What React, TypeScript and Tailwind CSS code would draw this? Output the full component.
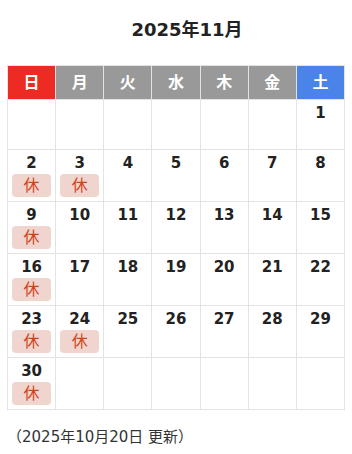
const HEAD = [
  { label: "日", bg: "bg-[#ee2b22]" },
  { label: "月", bg: "bg-[#999999]" },
  { label: "火", bg: "bg-[#999999]" },
  { label: "水", bg: "bg-[#999999]" },
  { label: "木", bg: "bg-[#999999]" },
  { label: "金", bg: "bg-[#999999]" },
  { label: "土", bg: "bg-[#4a84e8]" },
];

const HOLIDAYS = [2, 3, 9, 16, 23, 24, 30];

function buildWeeks() {
  // Nov 2025 starts on Saturday
  const cells: (number | null)[] = Array(6).fill(null);
  for (let d = 1; d <= 30; d++) cells.push(d);
  while (cells.length % 7) cells.push(null);
  const weeks: (number | null)[][] = [];
  for (let i = 0; i < cells.length; i += 7) weeks.push(cells.slice(i, i + 7));
  return weeks;
}

export default function App() {
  const weeks = buildWeeks();

  return (
    <div className="w-[352px] bg-white text-[#222]" style={{ fontFamily: '"DejaVu Sans", "Noto Sans CJK JP", sans-serif' }}>
      <h1 className="pt-[18px] pl-[22px] text-center text-[18px] font-bold leading-[24px]">2025年11月</h1>

      <table className="mx-[7px] mt-[23px] w-[338px] table-fixed border-collapse border border-[#e3e3e3]">
        <thead>
          <tr className="h-[34px]">
            {HEAD.map((h) => (
              <th key={h.label} className={`${h.bg} border border-[#e3e3e3] p-0 text-center text-[16px] font-bold text-white`}>
                {h.label}
              </th>
            ))}
          </tr>
        </thead>
        <tbody>
          {weeks.map((week, wi) => (
            <tr key={wi} className="h-[50px]">
              {week.map((d, di) => (
                <td key={di} className="border border-[#e3e3e3] px-[4px] pt-[3px] pb-[4px] align-top">
                  {d && (
                    <div className="flex flex-col items-center">
                      <span className="text-[15px] font-bold leading-[20px] text-[#222]">{d}</span>
                      {HOLIDAYS.includes(d) && (
                        <span className="mt-[1px] block h-[23px] w-full rounded-[4px] bg-[#f0d5cf] text-center text-[16px] leading-[23px] text-[#d2451b]">
                          休
                        </span>
                      )}
                    </div>
                  )}
                </td>
              ))}
            </tr>
          ))}
        </tbody>
      </table>

      <p className="mt-[17px] px-[7px] text-[15px] leading-[20px] text-[#333]">（2025年10月20日 更新）</p>
    </div>
  );
}
